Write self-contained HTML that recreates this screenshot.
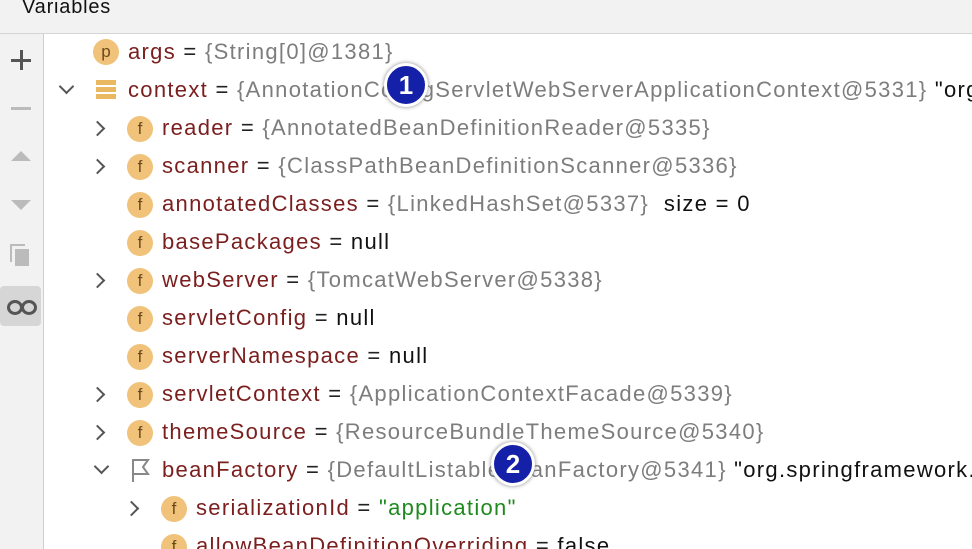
<!DOCTYPE html>
<html><head><meta charset="utf-8"><style>
html,body{margin:0;padding:0;overflow:hidden}
body{width:972px;height:549px;overflow:hidden;background:#fff;position:relative;font-family:"Liberation Sans",sans-serif;font-size:22px}
.hdr{position:absolute;left:0;top:0;width:972px;height:33px;background:#f2f2f2;border-bottom:1px solid #d4d4d4}
.hdr span{position:absolute;left:22px;top:-4px;font-size:20px;color:#111;letter-spacing:0.8px}
.side{position:absolute;left:0;top:34px;width:43px;height:515px;background:#f2f2f2;border-right:1px solid #cfcfcf}
.clip{position:absolute;left:44px;top:34px;width:928px;height:515px;overflow:hidden}
.row{position:absolute;height:38px;line-height:38px;white-space:nowrap;color:#222;letter-spacing:1.3px}
.n{color:#7a1e1e}.v{color:#7d7d7d}.s{color:#1e8a1e}.k{color:#111}
.ic{position:absolute;width:26px;height:26px;border-radius:50%;background:#f0c27a;color:#6b4a1a;font-size:17px;line-height:26px;text-align:center}
.arr{position:absolute;width:9px;height:9px;border-right:2px solid #555;border-bottom:2px solid #555}
.badge{position:absolute;width:38px;height:38px;border-radius:50%;background:#1520a8;border:3px solid #fff;box-shadow:0 0 4px #888;color:#fff;font-weight:bold;font-size:26px;line-height:38px;text-align:center}
</style></head><body>
<div class="hdr"><span>Variables</span></div>
<div class="side">
 <div style="position:absolute;left:11px;top:25px;width:20px;height:3px;background:#555"></div>
 <div style="position:absolute;left:19.5px;top:16px;width:3px;height:20px;background:#555"></div>
 <div style="position:absolute;left:11px;top:73px;width:20px;height:3px;background:#bbb"></div>
 <div style="position:absolute;left:11px;top:117px;width:0;height:0;border-left:10px solid transparent;border-right:10px solid transparent;border-bottom:10px solid #bbb"></div>
 <div style="position:absolute;left:11px;top:166px;width:0;height:0;border-left:10px solid transparent;border-right:10px solid transparent;border-top:10px solid #bbb"></div>
 <div style="position:absolute;left:10px;top:210px;width:13px;height:16px;border:2px solid #bbb;border-right:none;border-bottom:none"></div>
 <div style="position:absolute;left:15px;top:215px;width:14px;height:17px;background:#bbb"></div>
 <div style="position:absolute;left:0;top:252px;width:41px;height:40px;background:#d6d6d6;border-radius:4px"></div>
 <div style="position:absolute;left:7px;top:266px;width:10px;height:9px;border:3px solid #555;border-radius:50%"></div>
 <div style="position:absolute;left:21px;top:266px;width:10px;height:9px;border:3px solid #555;border-radius:50%"></div>
</div>
<div class="clip"><div style="position:absolute;left:-44px;top:-34px;width:972px;height:549px">

<div class="ic" style="left:93px;top:39px">p</div>
<div class="row" style="left:128px;top:33px"><span class="n">args</span> = <span class="v">{String[0]@1381}</span></div>

<div class="arr" style="left:61px;top:81px;transform:rotate(45deg)"></div>
<div style="position:absolute;left:96px;top:80px;width:20px;height:5px;background:#e9b860;box-shadow:0 7px 0 #e9b860,0 14px 0 #e9b860"></div>
<div class="row" style="left:128px;top:71px"><span class="n">context</span> = <span class="v">{AnnotationConfigServletWebServerApplicationContext@5331}</span> <span class="k">"org.springframework</span></div>

<div class="arr" style="left:92px;top:123px;transform:rotate(-45deg)"></div>
<div class="ic" style="left:127px;top:116px">f</div>
<div class="row" style="left:162px;top:109px"><span class="n">reader</span> = <span class="v">{AnnotatedBeanDefinitionReader@5335}</span></div>

<div class="arr" style="left:92px;top:161px;transform:rotate(-45deg)"></div>
<div class="ic" style="left:127px;top:154px">f</div>
<div class="row" style="left:162px;top:147px"><span class="n">scanner</span> = <span class="v">{ClassPathBeanDefinitionScanner@5336}</span></div>

<div class="ic" style="left:127px;top:192px">f</div>
<div class="row" style="left:162px;top:185px"><span class="n">annotatedClasses</span> = <span class="v">{LinkedHashSet@5337}</span> <span class="k">&nbsp;size = 0</span></div>

<div class="ic" style="left:127px;top:230px">f</div>
<div class="row" style="left:162px;top:223px"><span class="n">basePackages</span> = <span class="k">null</span></div>

<div class="arr" style="left:92px;top:275px;transform:rotate(-45deg)"></div>
<div class="ic" style="left:127px;top:268px">f</div>
<div class="row" style="left:162px;top:261px"><span class="n">webServer</span> = <span class="v">{TomcatWebServer@5338}</span></div>

<div class="ic" style="left:127px;top:306px">f</div>
<div class="row" style="left:162px;top:299px"><span class="n">servletConfig</span> = <span class="k">null</span></div>

<div class="ic" style="left:127px;top:344px">f</div>
<div class="row" style="left:162px;top:337px"><span class="n">serverNamespace</span> = <span class="k">null</span></div>

<div class="arr" style="left:92px;top:389px;transform:rotate(-45deg)"></div>
<div class="ic" style="left:127px;top:382px">f</div>
<div class="row" style="left:162px;top:375px"><span class="n">servletContext</span> = <span class="v">{ApplicationContextFacade@5339}</span></div>

<div class="arr" style="left:92px;top:427px;transform:rotate(-45deg)"></div>
<div class="ic" style="left:127px;top:420px">f</div>
<div class="row" style="left:162px;top:413px"><span class="n">themeSource</span> = <span class="v">{ResourceBundleThemeSource@5340}</span></div>

<div class="arr" style="left:96px;top:461px;transform:rotate(45deg)"></div>
<svg style="position:absolute;left:130px;top:457px" width="22" height="26"><path d="M3 25V3H18L13 10L18 17H3" fill="none" stroke="#888" stroke-width="2"/></svg>
<div class="row" style="left:162px;top:451px"><span class="n">beanFactory</span> = <span class="v">{DefaultListableBeanFactory@5341}</span> <span class="k">"org.springframework.beans</span></div>

<div class="arr" style="left:126px;top:503px;transform:rotate(-45deg)"></div>
<div class="ic" style="left:161px;top:496px">f</div>
<div class="row" style="left:196px;top:489px"><span class="n">serializationId</span> = <span class="s">"application"</span></div>

<div class="ic" style="left:161px;top:534px">f</div>
<div class="row" style="left:196px;top:527px"><span class="n">allowBeanDefinitionOverriding</span> = <span class="k">false</span></div>

<div class="badge" style="left:384px;top:63px">1</div>
<div class="badge" style="left:491px;top:442px">2</div>
</div></div>
</body></html>
